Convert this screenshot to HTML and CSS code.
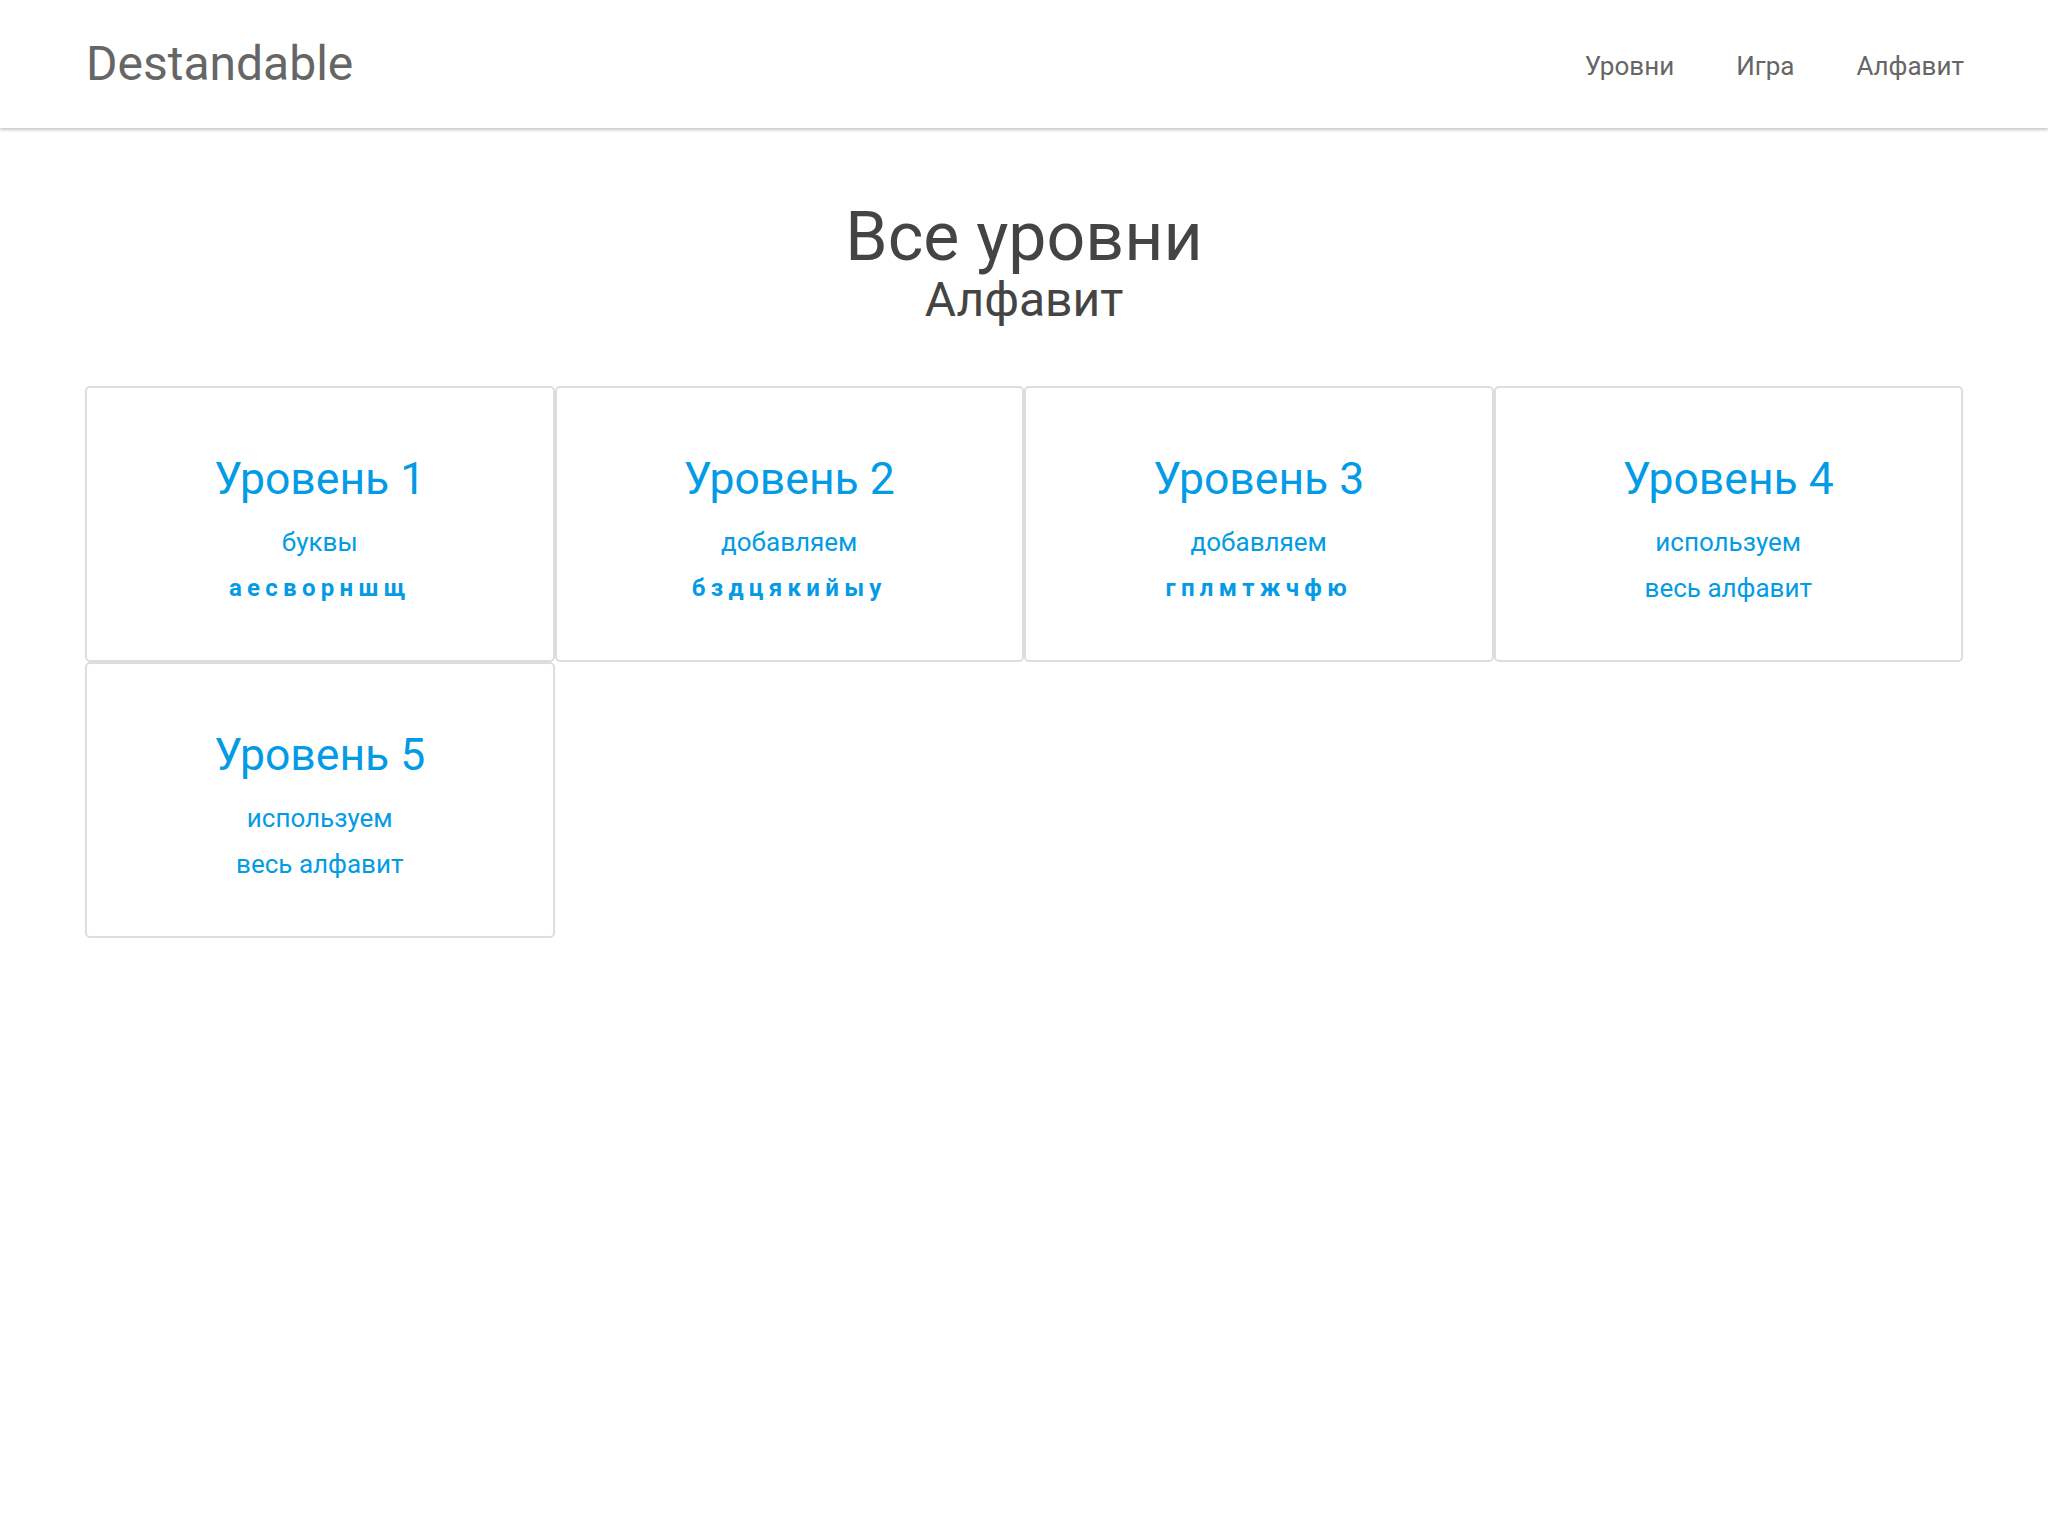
FILE: index.html
```html
<!DOCTYPE html>
<html lang="ru">
<head>
<meta charset="utf-8">
<title>Destandable</title>
<link rel="stylesheet" href="styles.css">
</head>
<body>
<header class="topbar">
  <a class="logo" href="#">Destandable</a>
  <nav class="nav">
    <a href="#">Уровни</a>
    <a href="#">Игра</a>
    <a href="#">Алфавит</a>
  </nav>
</header>
<main class="container">
  <h1 class="title">Все уровни</h1>
  <h2 class="subtitle">Алфавит</h2>
  <div class="grid">
    <a class="card" href="#">
      <h3 class="card-title">Уровень 1</h3>
      <p class="card-line">буквы</p>
      <p class="card-line letters">аесворншщ</p>
    </a>
    <a class="card" href="#">
      <h3 class="card-title">Уровень 2</h3>
      <p class="card-line">добавляем</p>
      <p class="card-line letters">бздцякийыу</p>
    </a>
    <a class="card" href="#">
      <h3 class="card-title">Уровень 3</h3>
      <p class="card-line">добавляем</p>
      <p class="card-line letters">гплмтжчфю</p>
    </a>
    <a class="card" href="#">
      <h3 class="card-title">Уровень 4</h3>
      <p class="card-line">используем</p>
      <p class="card-line">весь алфавит</p>
    </a>
    <a class="card" href="#">
      <h3 class="card-title">Уровень 5</h3>
      <p class="card-line">используем</p>
      <p class="card-line">весь алфавит</p>
    </a>
  </div>
</main>
</body>
</html>
```

FILE: styles.css
```css
* { box-sizing: border-box; }
html, body { margin: 0; padding: 0; background: #fff; }
body { font-family: Roboto, "Noto Sans", sans-serif; color: #444; }
a { text-decoration: none; }

.topbar {
  height: 128px;
  padding: 0 84px 0 86px;
  display: flex;
  align-items: center;
  justify-content: space-between;
  background: #fff;
  box-shadow: 0 2px 3px rgba(0,0,0,0.22);
}
.logo {
  font-size: 48px;
  line-height: 56px;
  color: #666;
}
.nav {
  display: flex;
  gap: 62px;
  padding-top: 4px;
}
.nav a {
  font-size: 26px;
  line-height: 56px;
  color: #666;
}

.container {
  margin: 0 85px;
  padding-top: 71px;
}
.title {
  margin: 0;
  text-align: center;
  font-weight: 400;
  font-size: 68px;
  line-height: 76px;
  color: #444;
}
.subtitle {
  margin: 1px 0 0;
  text-align: center;
  font-weight: 400;
  font-size: 48px;
  line-height: 48px;
  color: #444;
}
.grid {
  margin-top: 62px;
  display: grid;
  grid-template-columns: repeat(4, 1fr);
}
.card {
  display: block;
  border: 2px solid #ddd;
  border-radius: 5px;
  padding: 65px 10px 49px;
  text-align: center;
  color: #039be5;
}
.card-title {
  margin: 0 0 14px;
  font-weight: 400;
  font-size: 44.5px;
  line-height: 52px;
}
.card-line {
  margin: 0;
  font-size: 26px;
  line-height: 46px;
}
.letters {
  font-size: 24px;
  font-weight: 700;
  letter-spacing: 5.3px;
}
```
